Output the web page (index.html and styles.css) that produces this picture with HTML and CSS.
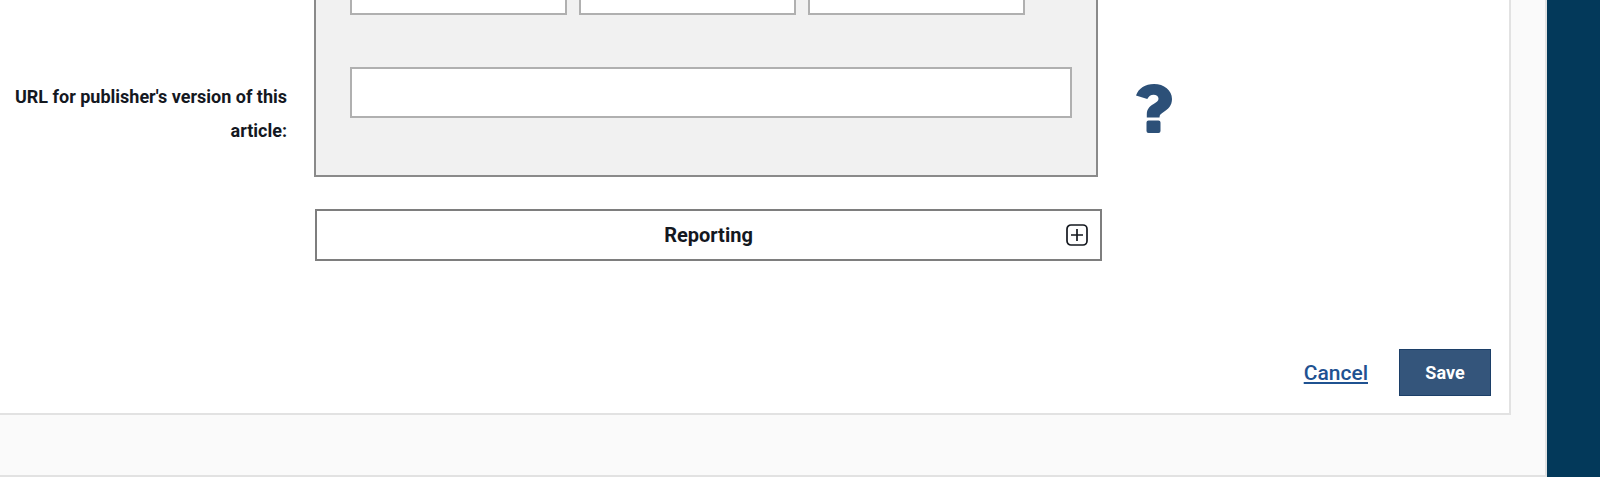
FILE: index.html
```html
<!DOCTYPE html>
<html lang="en">
<head>
<meta charset="utf-8">
<title>Edit article</title>
<link rel="stylesheet" href="styles.css">
</head>
<body>
<div class="page">
  <main class="main">
    <form class="card">
      <div class="form-row">
        <label class="field-label" for="url">URL for publisher's version of this article:</label>
        <div class="panel">
          <div class="triple">
            <input class="input" type="text" aria-label="Part 1">
            <input class="input" type="text" aria-label="Part 2">
            <input class="input" type="text" aria-label="Part 3">
          </div>
          <input class="input input-wide" id="url" type="text">
        </div>
        <svg class="help" viewBox="0 0 36 49" aria-hidden="true"><path d="M0 11.5C2.6 4.2 9.300 0 18 0c10 0 18 6.300 18 15 0 6.600-3.800 10.200-8.700 13.300-2.600 1.600-3.800 2.700-3.800 5.200H10.800v-3.300c0-5 2.700-7.700 6.400-9.900 3.500-2 5.300-3.200 5.300-5.500 0-2.600-2.300-4-4.900-4-2.900 0-4.800 1.500-6.300 4.200zM10.500 38.500a2 2 0 0 1 2-2h10a2 2 0 0 1 2 2V47a2 2 0 0 1-2 2h-10a2 2 0 0 1-2-2z"/></svg>
      </div>
      <div class="accordion">
        <span class="accordion-title">Reporting</span>
        <svg class="plus" viewBox="0 0 22 22" aria-hidden="true"><rect x="1" y="1" width="20" height="20" rx="4"/><path d="M5 11h12M11 5v12"/></svg>
      </div>
      <div class="actions">
        <a class="cancel" href="#">Cancel</a>
        <button class="save" type="button">Save</button>
      </div>
    </form>
  </main>
  <aside class="sidebar"></aside>
</div>
</body>
</html>
```
FILE: styles.css
```css
* { box-sizing: border-box; }
html, body { margin: 0; height: 100%; overflow: hidden; }
body { font-family: Roboto, "Liberation Sans", sans-serif; color: #14181f; background: #fafafa; }
.page { display: flex; height: 477px; }
.main {
  width: 1547px;
  height: 477px;
  background: #fafafa;
  border-right: 2px solid #e2e2e2;
  border-bottom: 2px solid #e2e2e2;
  overflow: hidden;
}
.sidebar { flex: 1; background: #03395a; }
.card {
  width: 1511px;
  height: 415px;
  background: #fff;
  border-right: 2px solid #e2e2e2;
  border-bottom: 2px solid #e2e2e2;
  display: flex;
  flex-direction: column;
  overflow: hidden;
}
.form-row { display: flex; align-items: flex-start; margin-top: -40px; margin-left: -40px; }
.field-label {
  width: 327px;
  margin-top: 120px;
  font-size: 18px;
  font-weight: 700;
  line-height: 34px;
  text-align: right;
  flex: none;
}
.panel {
  width: 784px;
  height: 217px;
  margin-left: 27px;
  padding: 0 34px;
  background: #f1f1f1;
  border: 2px solid #8a8a8a;
  border-top: 0;
  flex: none;
}
.triple { display: flex; gap: 12px; height: 55px; }
.input { display: block; background: #fff; border: 2px solid #b0b0b0; border-radius: 0; padding: 0; }
.triple .input { width: 217px; height: 55px; }
.input-wide { width: 722px; height: 51px; margin-top: 52px; }
.help { width: 36px; height: 49px; margin: 124px 0 0 38px; fill: #2c5078; flex: none; }
.accordion {
  position: relative;
  width: 787px;
  height: 52px;
  margin: 32px 0 0 315px;
  border: 2px solid #7e7e7e;
  display: flex;
  align-items: center;
  justify-content: center;
}
.accordion-title { font-size: 20px; font-weight: 700; }
.plus { position: absolute; right: 12px; top: 13px; width: 22px; height: 22px; fill: none; stroke: #14181f; stroke-width: 1.7; }
.actions { display: flex; justify-content: flex-end; align-items: center; gap: 31px; margin-top: 88px; padding-right: 18px; }
.cancel { font-size: 21px; font-weight: 500; color: #1f5291; }
.save {
  width: 92px;
  height: 47px;
  background: #34557b;
  border: 1px solid #1c3f68;
  color: #fff;
  font-family: inherit;
  font-size: 18px;
  font-weight: 700;
  padding: 0;
}
```
